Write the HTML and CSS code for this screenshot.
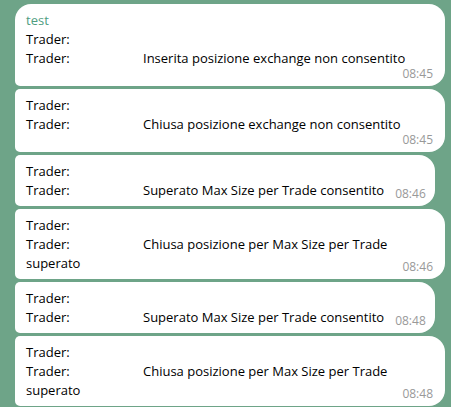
FILE: index.html
```html
<!DOCTYPE html>
<html>
  <head>
    <meta charset="UTF-8" />
    <title>Chat</title>
    <link rel="stylesheet" href="styles.css">
  </head>
  <body>
    <div class="chat">
      <div class="bubble bubble-first bubble-wide">
        <div class="sender">test</div>
        <div><span class="label">Trader:</span></div>
        <div><span class="label">Trader:</span>Inserita posizione exchange non consentito</div>
        <div class="time time-block">08:45</div>
      </div>

      <div class="bubble bubble-wide">
        <div><span class="label">Trader:</span></div>
        <div><span class="label">Trader:</span>Chiusa posizione exchange non consentito</div>
        <div class="time time-block">08:45</div>
      </div>

      <div class="bubble">
        <div><span class="label">Trader:</span></div>
        <div><span class="label">Trader:</span>Superato Max Size per Trade consentito<span class="time time-inline">08:46</span></div>
      </div>

      <div class="bubble bubble-wide">
        <div><span class="label">Trader:</span></div>
        <div><span class="label">Trader:</span>Chiusa posizione per Max Size per Trade superato<span class="time time-inline">08:46</span></div>
      </div>

      <div class="bubble">
        <div><span class="label">Trader:</span></div>
        <div><span class="label">Trader:</span>Superato Max Size per Trade consentito<span class="time time-inline">08:48</span></div>
      </div>

      <div class="bubble bubble-wide">
        <div><span class="label">Trader:</span></div>
        <div><span class="label">Trader:</span>Chiusa posizione per Max Size per Trade superato<span class="time time-inline">08:48</span></div>
      </div>
    </div>
  </body>
</html>
```

FILE: styles.css
```css
body {
  margin: 0;
  background: #6ea488;
  font-family: "Open Sans", "Noto Sans", sans-serif;
  font-size: 13px;
  line-height: 19px;
  color: #000;
}

.chat {
  display: flex;
  flex-direction: column;
  align-items: flex-start;
  gap: 3px;
  padding: 4px 0 0 15px;
}

.bubble {
  display: flow-root;
  box-sizing: border-box;
  max-width: 430px;
  padding: 7px 9px 5px 11px;
  background: #fff;
  border-radius: 5px 16px 16px 5px;
}

.bubble-wide {
  width: 430px;
  padding-right: 12px;
}

.bubble-first {
  border-top-left-radius: 16px;
}

.sender {
  color: #4f9d7f;
}

.label {
  display: inline-block;
  width: 117px;
}

.time {
  font-size: 12px;
  line-height: 14px;
  color: #999;
}

.time-block {
  margin-top: -1px;
  text-align: right;
}

.time-inline {
  float: right;
  margin: 6px 0 0 11px;
}
```
